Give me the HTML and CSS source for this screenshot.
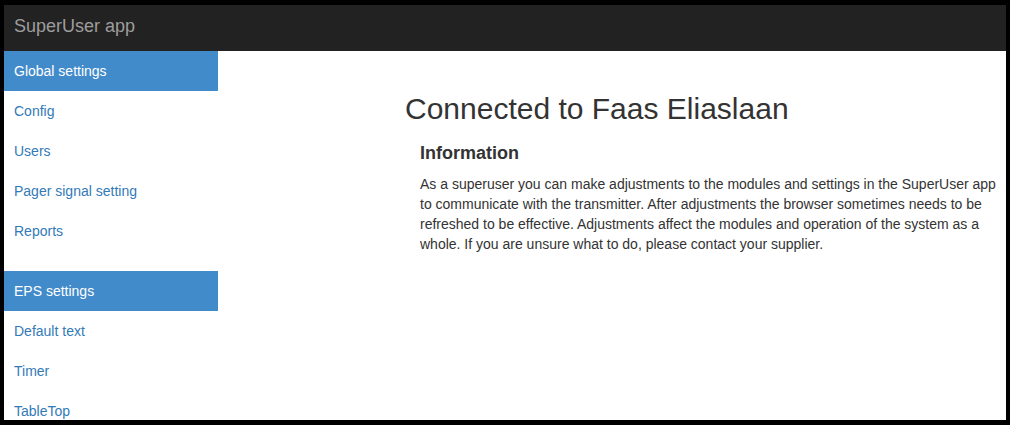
FILE: index.html
```html
<!DOCTYPE html>
<html>
<head>
<meta charset="utf-8">
<link rel="stylesheet" href="styles.css">
</head>
<body>
<div class="frame">
  <header class="navbar"><span class="brand">SuperUser app</span></header>
  <div class="layout">
    <nav class="sidebar">
      <div class="group">
        <div class="item active">Global settings</div>
        <a class="item">Config</a>
        <a class="item">Users</a>
        <a class="item">Pager signal setting</a>
        <a class="item">Reports</a>
      </div>
      <div class="group">
        <div class="item active">EPS settings</div>
        <a class="item">Default text</a>
        <a class="item">Timer</a>
        <a class="item">TableTop</a>
      </div>
    </nav>
    <main class="main">
      <h2 class="title">Connected to Faas Eliaslaan</h2>
      <section class="info">
        <h4 class="info-title">Information</h4>
        <p class="info-text">As a superuser you can make adjustments to the modules and settings in the SuperUser app to communicate with the transmitter. After adjustments the browser sometimes needs to be refreshed to be effective. Adjustments affect the modules and operation of the system as a whole. If you are unsure what to do, please contact your supplier.</p>
      </section>
    </main>
  </div>
</div>
</body>
</html>
```
FILE: styles.css
```css
html, body {
  margin: 0;
  padding: 0;
  background: #000;
}
body {
  font-family: "Liberation Sans", Arial, Helvetica, sans-serif;
  font-size: 14px;
  line-height: 20px;
  color: #333;
}
.frame {
  margin: 5px 4px;
  height: 415px;
  background: #fff;
  overflow: hidden;
  display: flex;
  flex-direction: column;
}
.navbar {
  background: #222;
  height: 46px;
  flex: none;
  box-sizing: border-box;
  padding: 11px 10px 0;
}
.brand {
  font-size: 18px;
  line-height: 20px;
  color: #9d9d9d;
}
.layout {
  flex: 1;
  display: flex;
  min-height: 0;
}
.sidebar {
  width: 214px;
  flex: none;
  display: flex;
  flex-direction: column;
  gap: 20px;
}
.group {
  display: flex;
  flex-direction: column;
}
.item {
  display: block;
  height: 40px;
  box-sizing: border-box;
  padding: 10px 10px;
  color: #337ab7;
  text-decoration: none;
}
.item.active {
  background: #428bca;
  color: #fff;
}
.main {
  flex: 1;
  padding: 41px 0 0 187px;
  min-width: 0;
}
.title {
  margin: 0 0 18px;
  font-size: 30px;
  line-height: 33px;
  font-weight: 500;
  color: #333;
}
.info {
  padding-left: 15px;
}
.info-title {
  margin: 0 0 11px;
  font-size: 18px;
  line-height: 20px;
  font-weight: bold;
  color: #333;
}
.info-text {
  margin: 0;
}
```
